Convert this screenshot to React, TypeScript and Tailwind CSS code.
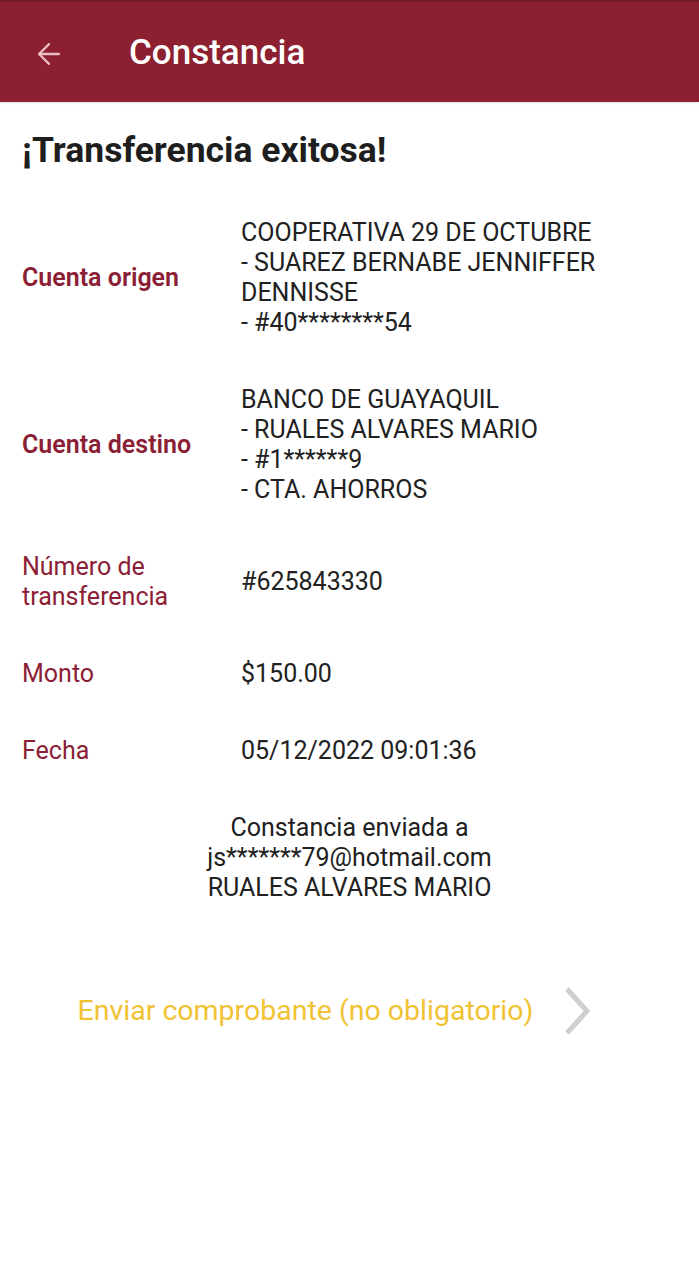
import { ArrowLeft } from "lucide-react";

type Row = { label: string; value: string[]; strong?: boolean };

const rows: Row[] = [
  {
    label: "Cuenta origen",
    strong: true,
    value: [
      "COOPERATIVA 29 DE OCTUBRE",
      "- SUAREZ BERNABE JENNIFFER",
      "DENNISSE",
      "- #40********54",
    ],
  },
  {
    label: "Cuenta destino",
    strong: true,
    value: [
      "BANCO DE GUAYAQUIL",
      "- RUALES ALVARES MARIO",
      "- #1******9",
      "- CTA. AHORROS",
    ],
  },
  { label: "Número de transferencia", value: ["#625843330"] },
  { label: "Monto", value: ["$150.00"] },
  { label: "Fecha", value: ["05/12/2022 09:01:36"] },
];

export default function App() {
  return (
    <div className="min-h-[1280px] w-[699px] bg-white font-['Roboto',sans-serif] text-[#212121]">
      <header className="flex h-[102px] items-center border-t-2 border-[#741a27] bg-[#8c1f30] pt-[3px] shadow-sm">
        <ArrowLeft className="ml-[32px] text-[#ecbcc3]" size={34} strokeWidth={1.6} />
        <h1 className="ml-[63px] text-[35px] font-medium text-white">Constancia</h1>
      </header>

      <main className="px-[22px]">
        <h2 className="mt-[28px] text-[35.5px] font-bold leading-[40px] text-[#1e1e1e]">
          ¡Transferencia exitosa!
        </h2>

        <div className="mt-[48px] flex flex-col gap-[47px]">
          {rows.map((row) => (
            <div key={row.label} className="flex items-center">
              <div
                className={
                  row.strong
                    ? "w-[219px] shrink-0 text-[25px] font-semibold leading-[30px] text-[#8b2035]"
                    : "mr-[19px] w-[200px] shrink-0 text-[25px] leading-[30px] text-[#8b2035]"
                }
              >
                {row.label}
              </div>
              <div className="text-[25px] leading-[30px]">
                {row.value.map((line) => (
                  <div key={line}>{line}</div>
                ))}
              </div>
            </div>
          ))}
        </div>

        <div className="mt-[47px] text-center text-[25px] leading-[30px]">
          <div>Constancia enviada a</div>
          <div>js*******79@hotmail.com</div>
          <div>RUALES ALVARES MARIO</div>
        </div>

        <div className="mt-[83px] flex items-center justify-center gap-[30px] pr-[30px]">
          <span className="text-[28.5px] leading-[36px] text-[#f1c233]">
            Enviar comprobante (no obligatorio)
          </span>
          <svg width="28" height="50" viewBox="0 0 28 50" fill="none">
            <polyline points="4,3 24,25 4,47" stroke="#cfcfcf" strokeWidth="5" />
          </svg>
        </div>
      </main>
    </div>
  );
}
